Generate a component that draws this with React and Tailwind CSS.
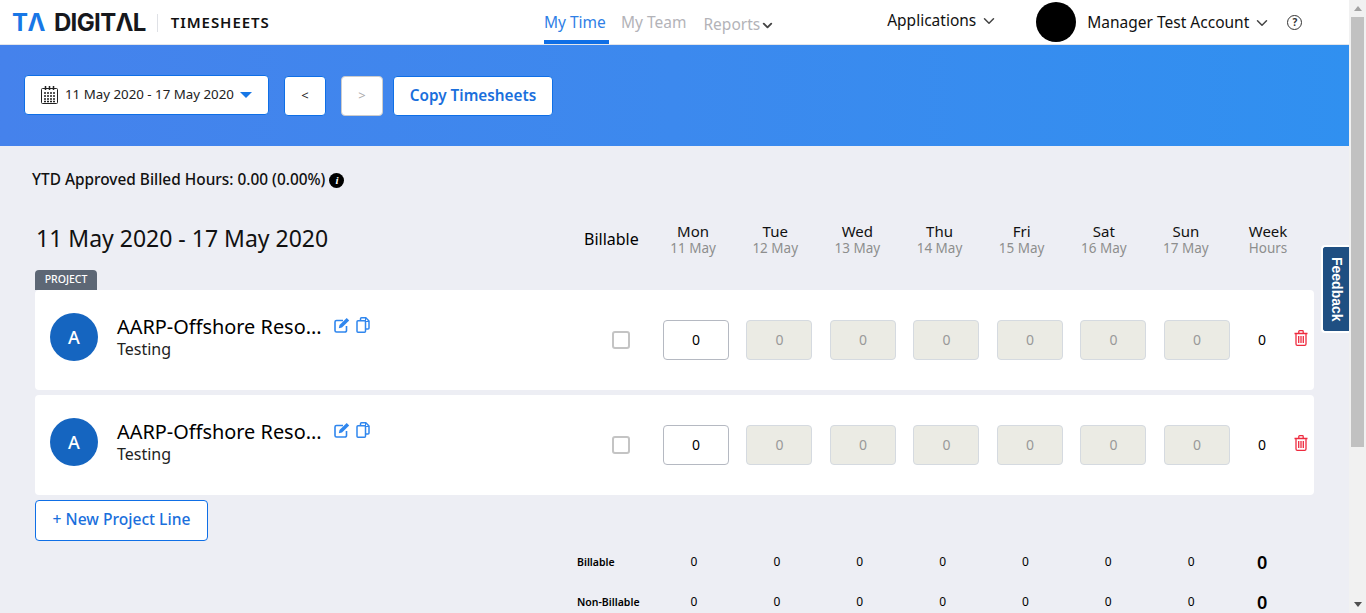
import React from "react";
import { ChevronDown } from "lucide-react";

const days = [["Mon","11 May"],["Tue","12 May"],["Wed","13 May"],["Thu","14 May"],["Fri","15 May"],["Sat","16 May"],["Sun","17 May"]];

function Calendar() {
  return (
    <svg width="17" height="18" viewBox="0 0 17 18" fill="none" stroke="#222" strokeWidth="1">
      <rect x="0.500" y="2.500" width="16" height="15" rx="1" />
      <path d="M4.500 0v4M8.500 0v4M12.500 0v4" strokeWidth="1.500" />
      <path d="M3 7h11M3 10h11M3 13h11M3 15.500h11" strokeWidth="1.700" strokeDasharray="2 1" />
    </svg>
  );
}
function Edit() {
  return (
    <svg width="16" height="16" viewBox="0 0 16 16" fill="none" stroke="#2f86ee" strokeWidth="1.600">
      <path d="M12.500 9v4.500a1.500 1.500 0 0 1-1.500 1.500H2.500A1.500 1.500 0 0 1 1 13.500V5a1.500 1.500 0 0 1 1.500-1.500h6.500" />
      <path d="M5.500 8 12.700 1l2.500 2.500-7.200 7-3.200.7z" fill="#2f86ee" stroke="none" />
    </svg>
  );
}
function Copy() {
  return (
    <svg width="14" height="16" viewBox="0 0 14 16" fill="none" stroke="#2f86ee" strokeWidth="1.500">
      <path d="M4.500 3.500V1.800a1 1 0 0 1 1-1h4.300l3.200 3.200v7a1 1 0 0 1-1 1H9.500" />
      <path d="M9.500 1v3.500H13" strokeWidth="1" />
      <rect x="1" y="3.800" width="8.500" height="11.400" rx="1" />
    </svg>
  );
}
function Trash() {
  return (
    <svg width="14" height="16" viewBox="0 0 14 16" fill="none" stroke="#ee2b3f" strokeWidth="1.300">
      <path d="M0.500 3.500h13M4.800 3V1.500a.8.8 0 0 1 .8-.8h2.800a.8.8 0 0 1 .8.800V3" />
      <path d="M2 3.500v10.500a1.300 1.300 0 0 0 1.300 1.300h7.400A1.300 1.300 0 0 0 12 14V3.500" />
      <path d="M4.700 6v7M7 6v7M9.300 6v7" />
    </svg>
  );
}

function ProjectRow() {
  return (
    <div className="flex h-[100px] items-center rounded bg-white">
      <div className="mb-[6px] ml-[15px] flex h-12 w-12 shrink-0 items-center justify-center rounded-full bg-[#1565c0] text-lg font-medium text-white">A</div>
      <div className="ml-[19px] w-[205px] shrink-0 pb-[7px]">
        <div className="whitespace-nowrap text-[19.900px] leading-6 text-black">AARP-Offshore Reso...</div>
        <div className="text-[16px] leading-5 text-[#222]">Testing</div>
      </div>
      <div className="mb-[30px] ml-[12px] flex w-[70px] shrink-0 items-center gap-[6px]"><Edit /><Copy /></div>
      <div className="ml-[208px] h-[18px] w-[18px] shrink-0 rounded-[3px] border-2 border-[#c4c4c4] bg-white" />
      <div className="ml-[32.900px] grid shrink-0 grid-cols-[66px_66px_66px_66px_66px_66px_66px] gap-x-[17.500px]">
        {days.map((d, i) => (
          <div key={d[0]} className={i === 0
            ? "flex h-10 items-center justify-center rounded border border-[#b5b9c2] bg-white text-sm text-black"
            : "flex h-10 items-center justify-center rounded border border-[#d5dae0] bg-[#ebebe4] text-sm text-[#999]"}>0</div>
        ))}
      </div>
      <div className="ml-[28px] w-[10px] shrink-0 text-sm text-black">0</div>
      <div className="mb-[4px] ml-[26px] shrink-0"><Trash /></div>
    </div>
  );
}

function TotalRow({ label, cls }) {
  return (
    <div className={"flex items-center " + cls}>
      <div className="w-[107px] pt-[2px] text-[10.500px] font-semibold text-black">{label}</div>
      <div className="grid w-[580px] shrink-0 grid-cols-[1fr_1fr_1fr_1fr_1fr_1fr_1fr] text-center text-xs text-black">
        {days.map((d) => <div key={d[0]} className="w-[20px]">0</div>)}
      </div>
      <div className="ml-[-7px] text-lg font-semibold leading-5 text-black">0</div>
    </div>
  );
}

export default function App() {
  return (
    <div className="flex h-[613px] w-[1366px] overflow-hidden bg-[#edeef4] text-black" style={{ fontFamily: '"Noto Sans", sans-serif' }}>
      <div className="relative w-[1349px] shrink-0">
        <header className="flex h-[45px] items-center border-b border-[#e3e5ea] bg-white">
          <div className="ml-[12px] flex w-[500px] shrink-0 items-center pt-[1px]">
            <span className="text-[24px] font-bold leading-none tracking-[-0.5px] text-[#1877e6]" style={{ fontFamily: '"Inter", sans-serif' }}>TΛ</span>
            <span className="ml-[9px] text-[24px] font-bold leading-none tracking-[-0.650px] text-[#16181d]" style={{ fontFamily: '"Inter", sans-serif' }}>DIGITΛL</span>
            <span className="ml-[11px] h-[18px] w-px bg-[#dfe1e6]" />
            <span className="ml-[13px] text-[15px] font-semibold tracking-[0.950px] text-[#111]">TIMESHEETS</span>
          </div>
          <nav className="ml-[32px] flex h-full shrink-0 items-stretch text-[15.500px]">
            <div className="flex w-[65px] items-center border-b-[4px] border-[#0f6fe6] pt-[5px] text-[#2f7fe6]">My Time</div>
            <div className="ml-[12px] flex items-center pt-[1px] text-[#b3b3b8]">My Team</div>
            <div className="ml-[17px] flex items-center pt-[6px] text-[#b3b3b8]">Reports<ChevronDown size={15} strokeWidth={3} className="text-[#444]" /></div>
          </nav>
          <div className="ml-[112px] flex shrink-0 items-center pb-[2px] text-[15.500px] text-[#111]">Applications<ChevronDown size={18} strokeWidth={2} className="ml-[4px] text-[#444]" /></div>
          <div className="ml-[38px] h-10 w-10 shrink-0 rounded-full bg-black" />
          <div className="ml-[11px] flex shrink-0 items-center pt-[2px] text-[15.500px] text-[#111]">Manager Test Account<ChevronDown size={18} strokeWidth={2} className="ml-[4px] text-[#444]" /></div>
          <div className="ml-[16px] flex h-[15px] w-[15px] items-center justify-center rounded-full border-[1.500px] border-[#333] text-[10px] font-bold leading-none text-[#333]">?</div>
        </header>

        <section className="flex h-[101px] items-center bg-gradient-to-r from-[#4582ec] to-[#3090f0] pl-6">
          <button className="mb-[1px] flex h-10 w-[245px] items-center rounded border border-[#0f6fe6] bg-white pl-4 text-[13.300px] text-[#222]">
            <Calendar /><span className="ml-[7px]">11 May 2020 - 17 May 2020</span>
            <span className="ml-[6px] h-0 w-0 border-x-[6px] border-t-[6px] border-x-transparent border-t-[#1877e6]" />
          </button>
          <button className="ml-[15px] h-10 w-[42px] rounded border border-[#0f6fe6] bg-white text-[13px] text-[#222]">&lt;</button>
          <button className="ml-[15px] h-10 w-[42px] rounded border border-[#ccc] bg-white text-[13px] text-[#aaa]">&gt;</button>
          <button className="ml-[10px] h-10 w-[160px] rounded border border-[#0f6fe6] bg-white text-[15.300px] font-semibold text-[#1a6fdc]">Copy Timesheets</button>
        </section>

        <main className="px-[35px]">
          <div className="ml-[-3px] mt-[24px] flex h-[20px] items-center gap-[4px] text-[15.400px] font-medium text-[#111]">
            YTD Approved Billed Hours: 0.00 (0.00%)
            <span className="flex h-[15px] w-[15px] items-center justify-center rounded-full bg-black text-[11px] font-bold italic leading-none text-white" style={{ fontFamily: '"Liberation Serif", serif' }}>i</span>
          </div>

          <div className="mt-[28px] flex h-[40px] items-center">
            <div className="w-[549px] shrink-0 pl-px text-[23px] text-[#111]">11 May 2020 - 17 May 2020</div>
            <div className="w-[68px] shrink-0 pt-[1px] text-[16px] text-black">Billable</div>
            <div className="grid w-[660px] shrink-0 grid-cols-[82.150px_82.150px_82.150px_82.150px_82.150px_82.150px_82.150px_82.150px] pt-[1px] text-center">
              {[...days, ["Week","Hours"]].map((d) => (
                <div key={d[0]}>
                  <div className="text-[15px] leading-[18px] text-[#111]">{d[0]}</div>
                  <div className="text-[13.500px] leading-[16px] text-[#8e8e8e]">{d[1]}</div>
                </div>
              ))}
            </div>
          </div>

          <div className="mt-[12px] flex h-[20px] w-[62px] items-center justify-center rounded-t bg-[#5d6775] text-[10.500px] font-medium text-white">PROJECT</div>
          <div className="flex flex-col gap-[5px]">
            <ProjectRow />
            <ProjectRow />
          </div>
          <button className="mt-[5px] h-[41px] w-[173px] rounded border border-[#0f6fe6] bg-white pb-[2px] text-[15.600px] font-medium text-[#1a6fdc]">+ New Project Line</button>

          <div className="ml-[542px] mt-[11px]">
            <TotalRow label="Billable" cls="h-[20px]" />
            <TotalRow label="Non-Billable" cls="mt-[20px] h-[20px]" />
          </div>
        </main>

        <div className="absolute right-0 top-[245px] flex h-[88px] w-[28px] items-center justify-center rounded-l border-2 border-r-0 border-white bg-[#1f4f82]">
          <span className="text-[14px] font-bold text-white [writing-mode:vertical-rl]" style={{ fontFamily: '"Liberation Sans", sans-serif' }}>Feedback</span>
        </div>
      </div>
      <div className="flex w-[17px] shrink-0 flex-col items-center bg-[#f1f1f1]">
        <div className="mt-[6px] h-0 w-0 border-x-[4px] border-b-[5px] border-x-transparent border-b-[#a3a3a3]" />
        <div className="mt-[6px] h-[430px] w-[13px] bg-[#c1c1c1]" />
        <div className="mb-[6px] mt-auto h-0 w-0 border-x-[4px] border-t-[5px] border-x-transparent border-t-[#505050]" />
      </div>
    </div>
  );
}
